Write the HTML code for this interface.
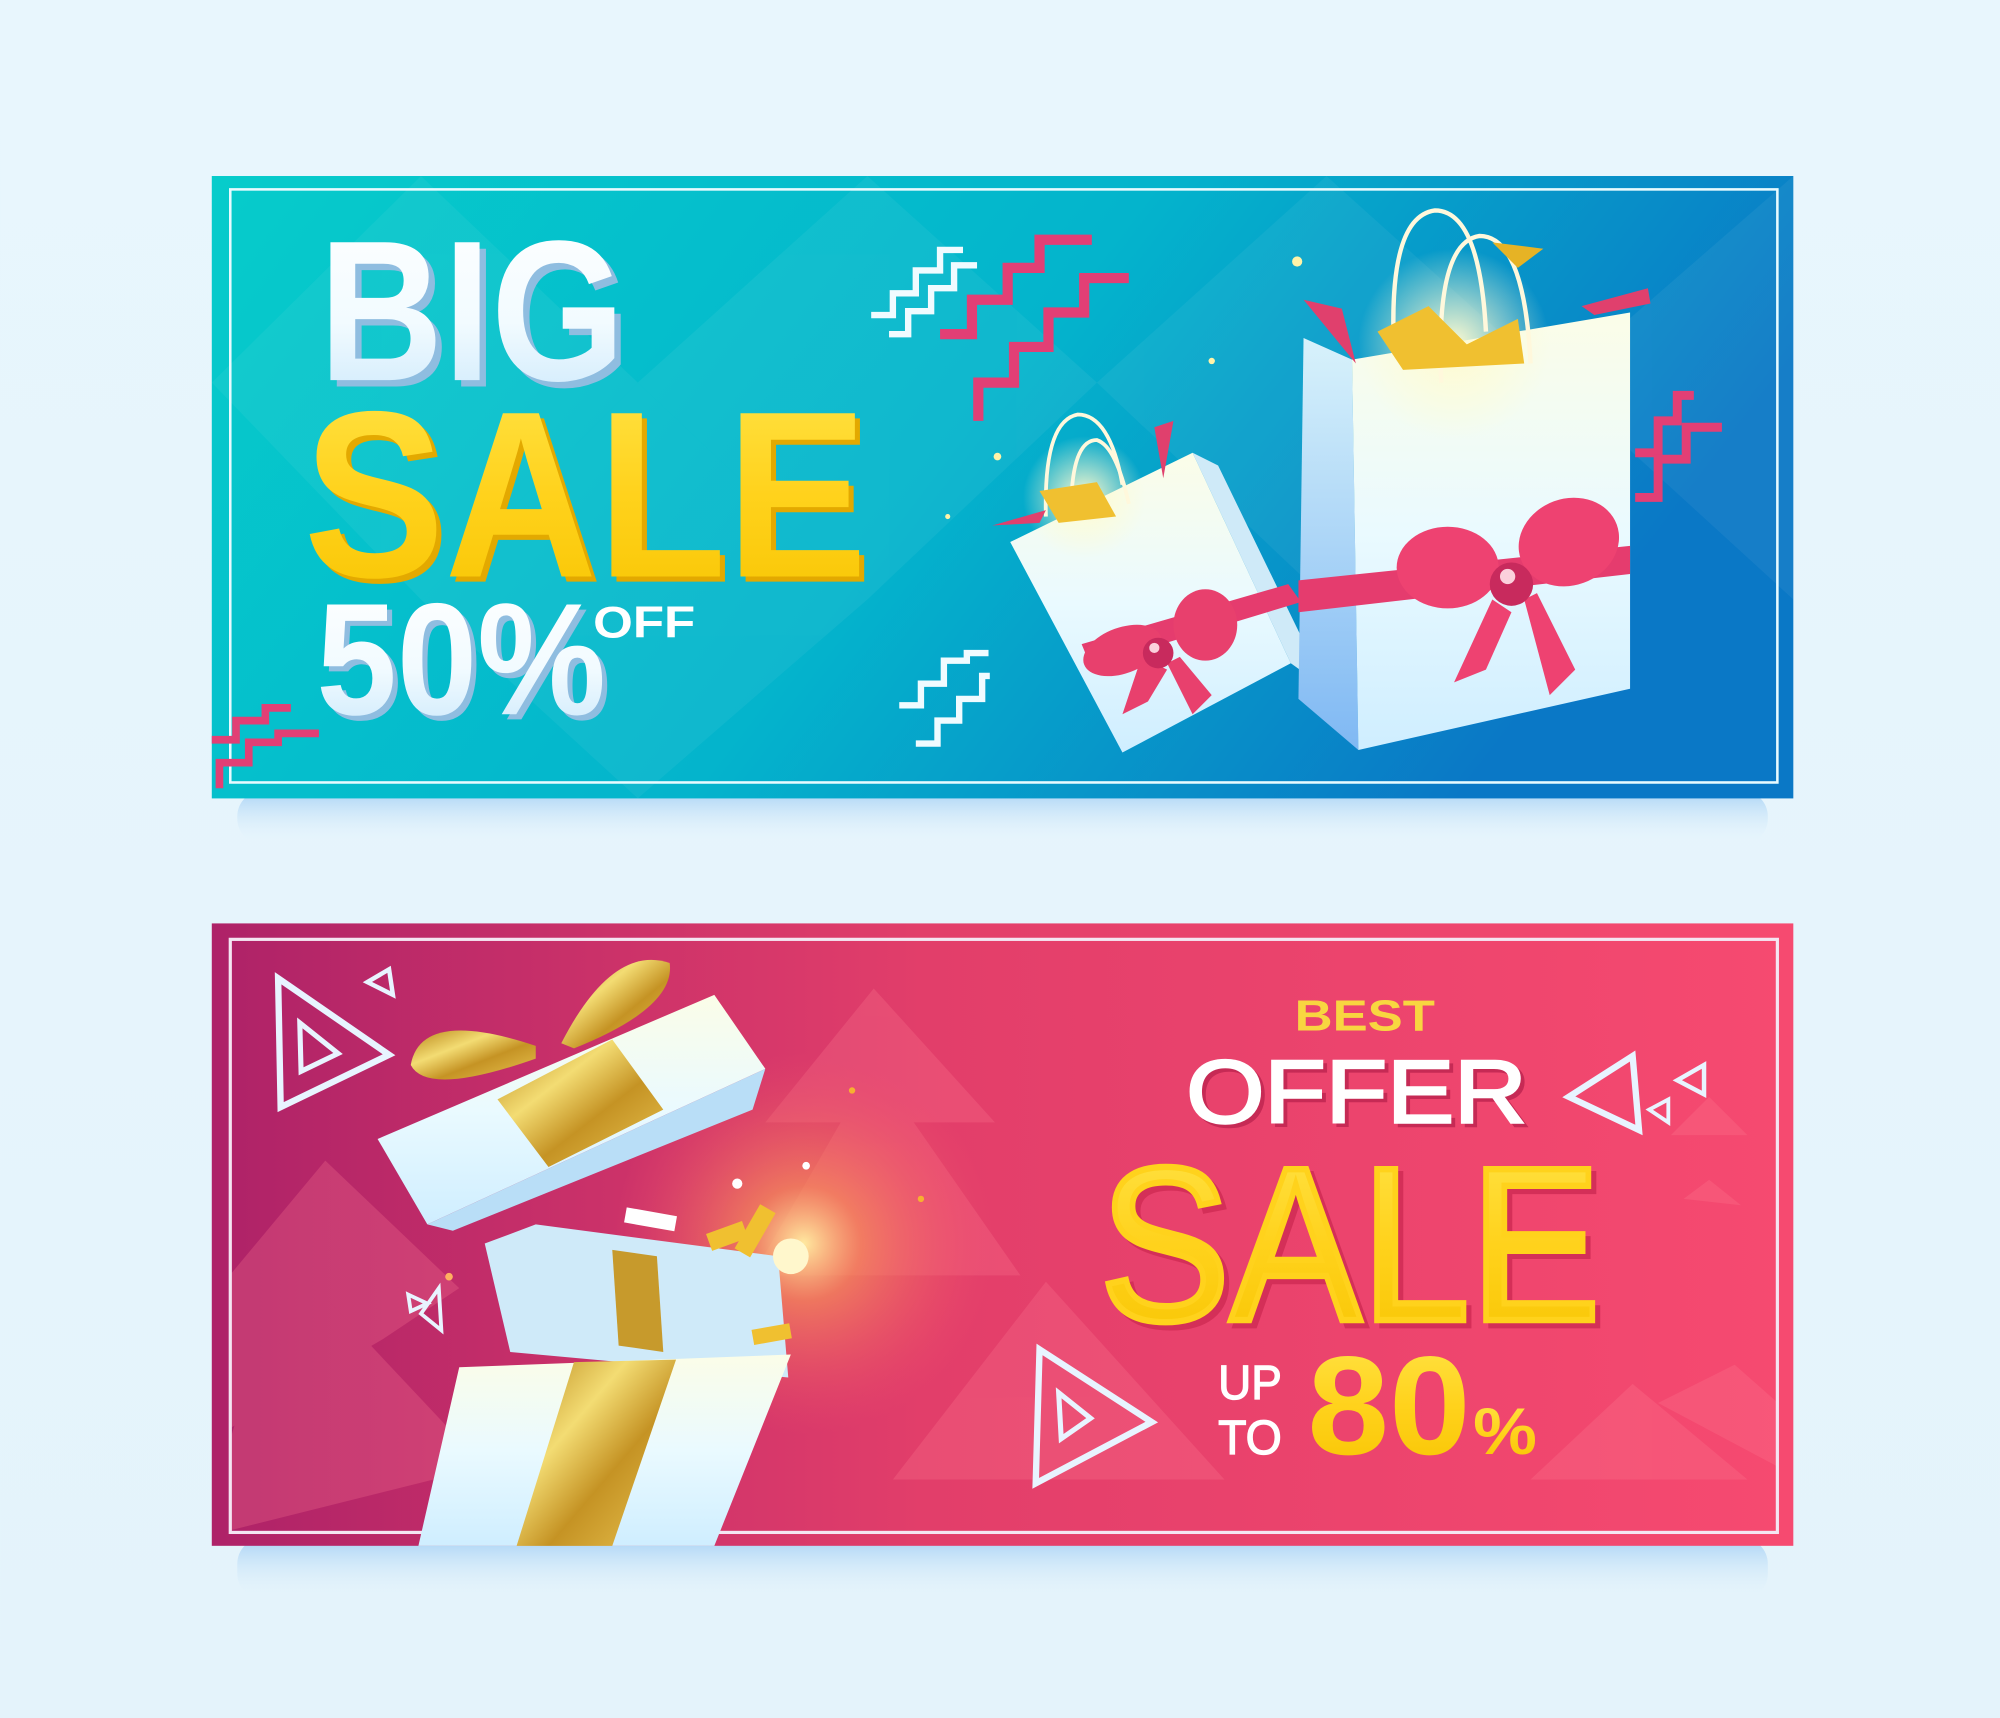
<!DOCTYPE html>
<html><head><meta charset="utf-8"><style>
html,body{margin:0;padding:0;width:2000px;height:1718px;overflow:hidden;background:#e6f5fc}
svg{display:block}
text{font-family:"Liberation Sans",sans-serif}
</style></head><body>
<svg width="2000" height="1718" viewBox="0 0 1568 1347" xmlns="http://www.w3.org/2000/svg">
<defs>
<linearGradient id="pg" x1="0" y1="0" x2="0" y2="1"><stop offset="0" stop-color="#e8f6fd"/><stop offset="1" stop-color="#e4f3fb"/></linearGradient>
<linearGradient id="tb" x1="0" y1="0" x2="1" y2="0.3"><stop offset="0" stop-color="#06cccb"/><stop offset="0.55" stop-color="#04b4cc"/><stop offset="1" stop-color="#0a78c6"/></linearGradient>
<linearGradient id="bb" x1="0" y1="0" x2="1" y2="0"><stop offset="0" stop-color="#ae2268"/><stop offset="0.45" stop-color="#e23e6a"/><stop offset="1" stop-color="#f64a70"/></linearGradient>
<radialGradient id="glow" cx="0.5" cy="0.5" r="0.5"><stop offset="0" stop-color="#ffe9a0" stop-opacity="1"/><stop offset="0.3" stop-color="#f7905a" stop-opacity="0.7"/><stop offset="1" stop-color="#f0506a" stop-opacity="0"/></radialGradient>
<radialGradient id="yglow" cx="0.5" cy="0.5" r="0.5"><stop offset="0" stop-color="#fffbd0" stop-opacity="1"/><stop offset="1" stop-color="#fffbd0" stop-opacity="0"/></radialGradient>
<linearGradient id="bag" x1="0" y1="0" x2="0" y2="1"><stop offset="0" stop-color="#fbfde8"/><stop offset="0.5" stop-color="#eafaff"/><stop offset="1" stop-color="#cfeeff"/></linearGradient>
<linearGradient id="side" x1="0" y1="0" x2="0" y2="1"><stop offset="0" stop-color="#d8f2fb"/><stop offset="1" stop-color="#7fb8f3"/></linearGradient>
<linearGradient id="gold" x1="0" y1="0" x2="1" y2="1"><stop offset="0" stop-color="#b88518"/><stop offset="0.35" stop-color="#f3dc73"/><stop offset="0.6" stop-color="#c59324"/><stop offset="1" stop-color="#e9c452"/></linearGradient>
<linearGradient id="yel" x1="0" y1="0" x2="0" y2="1"><stop offset="0" stop-color="#ffe54a"/><stop offset="0.5" stop-color="#ffd21c"/><stop offset="1" stop-color="#f7c400"/></linearGradient>
<linearGradient id="wht" x1="0" y1="0" x2="0" y2="1"><stop offset="0" stop-color="#ffffff"/><stop offset="0.55" stop-color="#f2fbff"/><stop offset="1" stop-color="#c6e6fb"/></linearGradient>
<linearGradient id="sh" x1="0" y1="0" x2="0" y2="1"><stop offset="0" stop-color="#a9d2f5"/><stop offset="1" stop-color="#e6f5fc" stop-opacity="0"/></linearGradient>
</defs>
<rect width="1568" height="1347" fill="url(#pg)"/>
<rect x="186" y="620" width="1200" height="42" rx="20" fill="url(#sh)"/>
<rect x="186" y="1206" width="1200" height="48" rx="20" fill="url(#sh)"/>

<!-- TOP BANNER -->
<rect x="166" y="138" width="1240" height="488" fill="url(#tb)"/>
<g fill="#ffffff" opacity="0.05">
<polygon points="166,300 330,138 500,300 330,470"/><polygon points="500,300 680,138 860,300 680,470"/><polygon points="860,300 1040,138 1220,300 1040,470"/><polygon points="330,470 500,300 680,470 500,626"/><polygon points="1220,300 1406,138 1406,470"/>
</g>
<rect x="180.5" y="148.5" width="1213" height="465" fill="none" stroke="#e8fbff" stroke-width="2"/>
<g fill="none" stroke-linejoin="miter">
<polyline points="683,247 700,247 700,230 718,230 718,212 737,212 737,196 755,196" stroke="#f0fbff" stroke-width="5"/>
<polyline points="697,262 712,262 712,244 730,244 730,226 748,226 748,208 766,208" stroke="#f0fbff" stroke-width="5"/>
<polyline points="737,262 762,262 762,235 790,235 790,210 815,210 815,188 856,188" stroke="#e23f75" stroke-width="8"/>
<polyline points="767,330 767,300 795,300 795,272 822,272 822,245 850,245 850,218 885,218" stroke="#e23f75" stroke-width="8"/>
<polyline points="705,553 722,553 722,536 740,536 740,518 758,518 758,512 775,512" stroke="#f0fbff" stroke-width="5"/>
<polyline points="718,583 735,583 735,565 752,565 752,548 770,548 770,530 776,530" stroke="#f0fbff" stroke-width="5"/>
<polyline points="1282,355 1300,355 1300,330 1315,330 1315,310 1328,310" stroke="#e23f75" stroke-width="7"/>
<polyline points="1282,390 1300,390 1300,360 1322,360 1322,335 1350,335" stroke="#e23f75" stroke-width="7"/>
<polyline points="166,580 185,580 185,565 208,565 208,555 228,555" stroke="#e23f75" stroke-width="6"/>
<polyline points="172,618 172,598 195,598 195,582 218,582 218,575 250,575" stroke="#e23f75" stroke-width="6"/>
</g>
<g fill="#fff3a8"><circle cx="1017" cy="205" r="4"/><circle cx="950" cy="283" r="2.5"/><circle cx="782" cy="358" r="3"/><circle cx="743" cy="405" r="2"/></g>
<!-- small bag -->
<polygon points="792,425 935,355 1012,520 880,590" fill="url(#bag)"/>
<polygon points="935,355 955,365 1040,540 1012,520" fill="#cfeaf8"/>
<circle cx="850" cy="390" r="48" fill="url(#yglow)"/>
<path d="M820 405 Q818 330 845 325 Q870 325 880 380" fill="none" stroke="#fff8dc" stroke-width="3"/>
<path d="M840 390 Q842 345 860 345 Q875 350 885 395" fill="none" stroke="#fff8dc" stroke-width="3"/>
<polygon points="815,385 860,378 875,405 830,410" fill="#f0c030"/>
<polygon points="905,335 920,330 912,375" fill="#e0406d"/>
<polygon points="778,412 820,400 815,410" fill="#e0406d"/>
<polygon points="848,505 1010,458 1020,472 855,522" fill="#e53c6e"/>
<g fill="#e8406d"><ellipse cx="880" cy="510" rx="32" ry="18" transform="rotate(-20 880 510)"/><ellipse cx="945" cy="490" rx="25" ry="28"/><polygon points="895,515 880,560 900,550 915,525"/><polygon points="915,520 935,560 950,545 925,515"/></g>
<circle cx="908" cy="512" r="12" fill="#c82a5d"/><circle cx="905" cy="508" r="4" fill="#fbd0dc"/>
<!-- big bag -->
<polygon points="1022,265 1060,282 1065,588 1018,548" fill="url(#side)"/>
<polygon points="1060,282 1278,245 1278,540 1065,588" fill="url(#bag)"/>
<circle cx="1140" cy="270" r="75" fill="url(#yglow)"/>
<path d="M1093 275 Q1088 170 1125 165 Q1160 165 1165 260" fill="none" stroke="#fff8dc" stroke-width="3.5"/>
<path d="M1130 300 Q1125 190 1160 185 Q1195 185 1200 285" fill="none" stroke="#fff8dc" stroke-width="3.5"/>
<polygon points="1080,260 1120,240 1150,270 1190,250 1195,285 1100,290" fill="#f0c030"/>
<polygon points="1170,190 1210,195 1190,210" fill="#e6b325"/>
<polygon points="1022,235 1052,242 1063,285" fill="#e0406d"/>
<polygon points="1240,240 1292,226 1294,238 1250,247" fill="#e0406d"/>
<polygon points="1018,455 1278,428 1278,450 1018,480" fill="#e53c6e"/>
<g fill="#ee4271"><ellipse cx="1135" cy="445" rx="40" ry="32"/><ellipse cx="1230" cy="425" rx="40" ry="34" transform="rotate(-20 1230 425)"/><polygon points="1170,470 1140,535 1165,525 1185,480"/><polygon points="1195,470 1215,545 1235,525 1205,465"/></g>
<circle cx="1185" cy="458" r="17" fill="#c82a5d"/><circle cx="1182" cy="452" r="6" fill="#fbd0dc"/>
<!-- top text -->
<text x="255" y="303" font-size="157" font-weight="700" fill="#8fbde0" textLength="240" lengthAdjust="spacingAndGlyphs">BIG</text>
<text x="250" y="298" font-size="157" font-weight="700" fill="url(#wht)" textLength="240" lengthAdjust="spacingAndGlyphs">BIG</text>
<text x="242" y="456" font-size="186" font-weight="700" fill="#e3a900" textLength="442" lengthAdjust="spacingAndGlyphs">SALE</text>
<text x="238" y="452" font-size="186" font-weight="700" fill="url(#yel)" textLength="442" lengthAdjust="spacingAndGlyphs">SALE</text>
<text x="252" y="564" font-size="125" font-weight="700" fill="#8fbde0" textLength="227" lengthAdjust="spacingAndGlyphs">50%</text>
<text x="248" y="560" font-size="125" font-weight="700" fill="url(#wht)" textLength="227" lengthAdjust="spacingAndGlyphs">50%</text>
<text x="465" y="500" font-size="35" font-weight="700" fill="#ffffff" textLength="80" lengthAdjust="spacingAndGlyphs">OFF</text>

<!-- BOTTOM BANNER -->
<rect x="166" y="724" width="1240" height="488" fill="url(#bb)"/>
<g fill="#ff7e95" opacity="0.25">
<polygon points="180,1000 255,910 360,1010 300,1050 180,1120"/><polygon points="180,1130 225,985 380,1150 180,1200"/>
<polygon points="600,880 685,775 780,880"/><polygon points="590,1000 685,835 800,1000"/>
<polygon points="700,1160 820,1005 960,1160"/><polygon points="1200,1160 1280,1085 1370,1160"/>
<polygon points="1310,890 1340,860 1370,890"/><polygon points="1320,940 1340,925 1365,945"/><polygon points="1300,1100 1360,1070 1394,1100 1394,1150"/>
</g>
<circle cx="630" cy="975" r="150" fill="url(#glow)"/>
<rect x="180.5" y="736.5" width="1213" height="465" fill="none" stroke="#f4e6f2" stroke-width="2.5"/>
<g fill="none" stroke="#e8f4ff" stroke-width="5">
<polygon points="218,767 305,827 220,868"/><polygon points="235,802 265,826 236,840" stroke-width="4"/>
<polygon points="288,770 305,760 308,780" stroke-width="3.5"/>
<polygon points="320,1015 335,1022 322,1028" stroke-width="3"/><polygon points="330,1030 344,1010 346,1043" stroke-width="3"/>
<polygon points="1230,860 1280,828 1285,886"/>
<polygon points="1315,847 1336,835 1336,858" stroke-width="3.5"/><polygon points="1293,870 1308,862 1308,880" stroke-width="3"/>
<polygon points="815,1058 903,1115 812,1163"/><polygon points="830,1092 855,1112 832,1128" stroke-width="4"/>
</g>
<!-- gift box -->
<polygon points="380,975 420,960 610,985 618,1080 400,1060" fill="#cfeaf9"/>
<polygon points="480,980 515,985 520,1060 485,1055" fill="#c79a2c"/>
<polygon points="360,1072 620,1062 560,1212 328,1212" fill="url(#bag)"/>
<polygon points="450,1068 530,1066 480,1212 405,1212" fill="url(#gold)"/>
<polygon points="296,893 560,780 600,838 335,960" fill="url(#bag)"/>
<polygon points="335,960 600,838 590,870 355,965" fill="#b9def7"/>
<polygon points="390,862 480,815 520,870 430,915" fill="url(#gold)"/>
<path d="M420 820 Q330 790 322 835 Q335 860 420 830 Z" fill="url(#gold)"/>
<path d="M440 818 Q480 740 525 755 Q530 790 450 822 Z" fill="url(#gold)"/>
<g fill="#f0c030"><rect x="555" y="962" width="30" height="14" transform="rotate(-20 570 969)"/><rect x="590" y="1040" width="30" height="12" transform="rotate(-10 605 1046)"/><rect x="585" y="945" width="14" height="40" transform="rotate(30 592 965)"/></g>
<g fill="#ffffff"><rect x="490" y="950" width="40" height="12" transform="rotate(10 510 956)"/><circle cx="632" cy="914" r="3"/><circle cx="578" cy="928" r="4"/></g>
<circle cx="620" cy="985" r="14" fill="#fff7cc"/>
<g fill="#f7b030"><circle cx="668" cy="855" r="2.5"/><circle cx="722" cy="940" r="2.5"/><circle cx="352" cy="1001" r="3" fill="#ffb060"/></g>
<!-- bottom text -->
<text x="1015" y="808" font-size="34" font-weight="700" fill="#f8d640" textLength="110" lengthAdjust="spacingAndGlyphs">BEST</text>
<text x="933" y="883" font-size="70" font-weight="400" fill="#c62a55" stroke="#c62a55" stroke-width="2" textLength="267" lengthAdjust="spacingAndGlyphs">OFFER</text>
<text x="930" y="880" font-size="70" font-weight="400" fill="#ffffff" stroke="#ffffff" stroke-width="2" textLength="267" lengthAdjust="spacingAndGlyphs">OFFER</text>
<text x="866" y="1039" font-size="172" font-weight="400" fill="#d42f58" stroke="#d42f58" stroke-width="5" textLength="393" lengthAdjust="spacingAndGlyphs">SALE</text>
<text x="862" y="1035" font-size="172" font-weight="400" fill="url(#yel)" stroke="#ffd21c" stroke-width="5" textLength="393" lengthAdjust="spacingAndGlyphs">SALE</text>
<text x="955" y="1097" font-size="38" font-weight="400" fill="#ffffff" stroke="#fff" stroke-width="1" textLength="50" lengthAdjust="spacingAndGlyphs">UP</text>
<text x="955" y="1140" font-size="38" font-weight="400" fill="#ffffff" stroke="#fff" stroke-width="1" textLength="50" lengthAdjust="spacingAndGlyphs">TO</text>
<text x="1025" y="1140" font-size="110" font-weight="700" fill="url(#yel)" textLength="128" lengthAdjust="spacingAndGlyphs">80</text>
<text x="1155" y="1140" font-size="52" font-weight="700" fill="url(#yel)" textLength="50" lengthAdjust="spacingAndGlyphs">%</text>
</svg>
</body></html>
